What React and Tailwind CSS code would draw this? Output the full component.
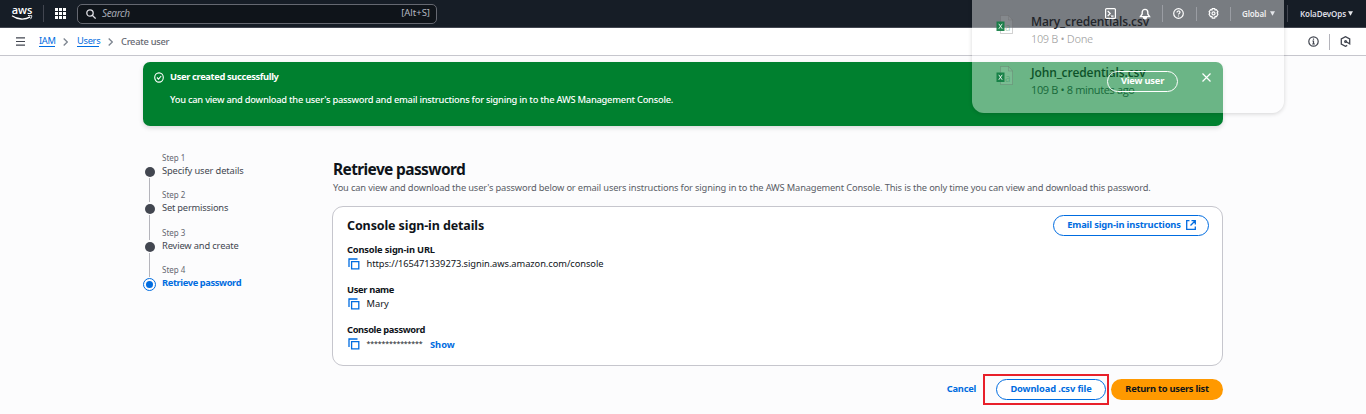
const Copy = () => (
  <svg className="ml-[1px] h-[12px] w-[12px] shrink-0" viewBox="0 0 12 12" fill="none" stroke="#006ce0" strokeWidth="1.3">
    <path d="M1 9V1h8.5" />
    <path d="M3.6 3.6h7.2v7.2H3.6z" />
  </svg>
);

const Chevron = () => (
  <svg className="h-[8px] w-[5px]" viewBox="0 0 5 8" fill="none" stroke="#7d8590" strokeWidth="1.3">
    <path d="M.7.5 4.3 4 .7 7.5" />
  </svg>
);

const Caret = () => (
  <svg className="h-[5px] w-[5px]" viewBox="0 0 5 5" fill="#e4e6ea">
    <path d="M0 .3h5L2.5 4.7z" />
  </svg>
);

const Divider = ({ className = "" }) => <div className={`h-[17px] w-px bg-[#424650] ${className}`} />;

function Header() {
  return (
    <header className="flex h-[28px] items-center border-b border-[#424650] bg-[#161d26] text-[#dedee3]">
      <div className="ml-[11px] flex h-[15px] w-[22px] flex-col items-center">
        <span className="h-[9px] font-['Open_Sans'] text-[11px] leading-[8px] font-semibold tracking-[-0.1px] text-white">aws</span>
        <svg className="h-[6px] w-[22px]" viewBox="0 0 22 6" fill="none" stroke="#fff">
          <path d="M1 .8c5.500 4 13 4.200 18.300 1.100" strokeWidth="1.300" />
          <path d="M17 .6c1.500-.4 3-.4 3.700 0 .1 1.200-.3 2.500-1.400 3.600" strokeWidth="1" />
        </svg>
      </div>
      <Divider className="ml-[10px]" />
      <svg className="ml-[11px] h-[11px] w-[11px]" viewBox="0 0 11 11" fill="#fff">
        {[0, 4, 8].map((y) => [0, 4, 8].map((x) => <rect key={`${x}${y}`} x={x} y={y} width="3" height="3" />))}
      </svg>
      <div className="ml-[11px] flex h-[20px] w-[360px] items-center rounded-[5px] border border-[#656871] bg-[#0f141a] pr-[6px] pl-[8px] text-[10px]">
        <svg className="h-[10px] w-[10px]" viewBox="0 0 10 10" fill="none" stroke="#dedee3" strokeWidth="1.3">
          <circle cx="4" cy="4" r="3.200" />
          <path d="m6.400 6.400 3.200 3.200" />
        </svg>
        <span className="ml-[6px] tracking-[-0.35px] text-[#a4a8b2] italic">Search</span>
        <span className="ml-auto text-[9.500px] text-[#b4b8c0]">[Alt+S]</span>
      </div>
      <div className="relative z-10 ml-[668px] flex h-full items-center">
        <svg className="h-[11px] w-[11px]" viewBox="0 0 11 11" fill="none" stroke="#fff" strokeWidth="1.200">
          <rect x=".6" y=".6" width="9.800" height="9.800" rx="1" />
          <path d="m2.700 3 2.500 2.500L2.700 8M5.800 8.100h2.700" />
        </svg>
        <Divider className="ml-[12px] opacity-0" />
        <svg className="ml-[10px] h-[12px] w-[12px]" viewBox="0 0 12 12" fill="none" stroke="#fff" strokeWidth="1.400">
          <path d="M3.200 6V4.200a2.800 2.800 0 0 1 5.600 0V6l1.700 2.600h-9z" />
          <path d="M4.500 9.500c.3 1.800 2.700 1.800 3 0z" fill="#fff" />
        </svg>
        <div className="ml-[11px] h-[17px] w-px bg-[#9a9da3]" />
        <svg className="ml-[10px] h-[11px] w-[11px]" viewBox="0 0 11 11" fill="none" stroke="#fff" strokeWidth="1.200">
          <circle cx="5.500" cy="5.500" r="4.800" />
          <path d="M4 4.500c0-2 3-2 3-.2 0 1.200-1.500 1-1.500 2.300M5.500 7.400v1.100" />
        </svg>
        <div className="ml-[12px] h-[14px] w-px bg-[#9a9da3]" />
        <svg className="ml-[11px] h-[11px] w-[11px]" viewBox="0 0 11 11" fill="none" stroke="#fff" strokeWidth="1.200">
          <path d="M4.300.7h2.400l.4 1.300 1.300-.3 1.500 2-.8 1.100.8 1.500-1.400 2.200-1.400-.2-.4 1.900H4.300l-.4-1.900-1.400.2-1.400-2.200.8-1.500-.8-1.100 1.500-2 1.300.3z" />
          <circle cx="5.500" cy="5.400" r="1.500" />
        </svg>
        <div className="ml-[11px] h-[14px] w-px bg-[#9a9da3]" />
        <span className="ml-[11px] w-[28px] text-[8px] font-semibold tracking-[-0.15px] whitespace-nowrap text-[#f0f0f2]">Global</span>
        <Caret />
        <Divider className="ml-[12px]" />
        <span className="ml-[12px] w-[48px] text-[8px] font-semibold tracking-[-0.1px] whitespace-nowrap">KolaDevOps</span>
        <Caret />
      </div>
    </header>
  );
}

function Breadcrumbs() {
  return (
    <nav className="flex h-[28px] items-center border-b border-[#c6c6cd] bg-white text-[9.300px] leading-[10px]">
      <svg className="ml-[16px] h-[9px] w-[9px]" viewBox="0 0 9 9" stroke="#424650" strokeWidth="1.200">
        <path d="M0 .9h9M0 4.500h9M0 8.100h9" />
      </svg>
      <a className="ml-[14px] w-[16px] border-b border-[#006ce0] tracking-[-0.3px] whitespace-nowrap text-[#006ce0]">IAM</a>
      <div className="ml-[8px]"><Chevron /></div>
      <a className="ml-[9px] w-[22px] border-b border-[#006ce0] tracking-[-0.3px] whitespace-nowrap text-[#006ce0]">Users</a>
      <div className="ml-[9px]"><Chevron /></div>
      <span className="ml-[8px] font-medium tracking-[-0.27px] whitespace-nowrap text-[#656871]">Create user</span>
      <div className="mr-[15px] ml-auto flex items-center">
        <svg className="h-[11px] w-[11px]" viewBox="0 0 11 11" fill="none" stroke="#424650" strokeWidth="1.200">
          <circle cx="5.500" cy="5.500" r="4.700" />
          <path d="M4.400 5h1.100v3M4.200 8h2.700M5.500 2.500v1.200" />
        </svg>
        <div className="ml-[10px] h-[16px] w-px bg-[#b4b4bb]" />
        <svg className="ml-[10px] h-[11px] w-[11px]" viewBox="0 0 11 11" fill="none" stroke="#424650" strokeWidth="1.300">
          <path d="M7.200 9.400 5.500 10.300 1.300 8V3L5.500.7 9.700 3v4.800L5.800 5.500" />
          <circle cx="5.600" cy="5.500" r=".9" />
        </svg>
      </div>
    </nav>
  );
}

function Banner() {
  return (
    <section className="mx-[143px] mt-[6px] h-[64px] rounded-[7px] bg-[#00802f] text-white shadow-[0_2px_5px_rgba(0,0,0,0.14)]">
      <div className="flex h-full items-start pt-[9px] pr-[12px] pl-[11px]">
        <svg className="mt-[1px] h-[11px] w-[10px]" viewBox="0 0 10 11" fill="none" stroke="#fff" strokeWidth="1.100">
          <ellipse cx="5" cy="5.500" rx="4.300" ry="4.600" />
          <path d="m3 5.500 1.500 1.600L7.200 4" />
        </svg>
        <div className="ml-[6px] text-[9.300px] leading-[12px] whitespace-nowrap">
          <p className="font-bold tracking-[-0.35px]">User created successfully</p>
          <p className="mt-[11px] font-medium tracking-[-0.235px]">You can view and download the user's password and email instructions for signing in to the AWS Management Console.</p>
        </div>
        <button className="relative z-10 ml-auto flex h-[21px] w-[71px] items-center justify-center rounded-full border border-white pb-[1px] text-[9.300px] font-bold tracking-[-0.2px] whitespace-nowrap">View user</button>
        <svg className="relative z-10 mt-[2px] ml-[24px] h-[9px] w-[9px]" viewBox="0 0 9 9" stroke="#fff" strokeWidth="1.200">
          <path d="m.5.5 8 8M8.500.5l-8 8" />
        </svg>
      </div>
    </section>
  );
}

const steps = [
  { label: "Specify user details", style: "tracking-[-0.11px] text-[#424650]" },
  { label: "Set permissions", style: "tracking-[-0.2px] text-[#424650]" },
  { label: "Review and create", style: "tracking-[-0.14px] text-[#424650]" },
  { label: "Retrieve password", style: "font-bold tracking-[-0.38px] text-[#006ce0]" },
];

function Steps() {
  return (
    <ol className="mt-[26px] w-[189px]">
      {steps.map(({ label, style }, i) => {
        const first = i === 0;
        const active = i === 3;
        return (
          <li key={label} className="flex h-[37.300px]">
            <div className="flex w-[13px] flex-col items-center">
              <div className={first ? "h-[13px] shrink-0" : "h-[13px] w-px shrink-0 bg-[#b4b4bb]"} />
              {active ? (
                <div className="mt-[1px] flex h-[13px] w-[13px] shrink-0 items-center justify-center rounded-full border-[1.500px] border-[#006ce0]">
                  <div className="h-[7px] w-[7px] rounded-full bg-[#006ce0]" />
                </div>
              ) : (
                <>
                  <div className="mt-[2px] h-[10px] w-[10px] shrink-0 rounded-full bg-[#424650]" />
                  <div className="mt-[1px] w-px grow bg-[#b4b4bb]" />
                </>
              )}
            </div>
            <div className="ml-[6px] whitespace-nowrap">
              <p className="text-[8px] leading-[12px] text-[#656871]">Step {i + 1}</p>
              <p className={`text-[9.300px] leading-[14px] ${style}`}>{label}</p>
            </div>
          </li>
        );
      })}
    </ol>
  );
}

function Field({ label, labelStyle, children }) {
  return (
    <div className="h-[40px] text-[9.300px] leading-[14px] whitespace-nowrap">
      <p className={`font-bold ${labelStyle}`}>{label}</p>
      <div className="flex h-[14px] items-center">
        <Copy />
        {children}
      </div>
    </div>
  );
}

function Details() {
  return (
    <main className="w-[891px] text-[#0f141a]">
      <h1 className="mt-[33px] pl-[1px] text-[15.500px] leading-[20px] font-bold tracking-[-0.63px] whitespace-nowrap">Retrieve password</h1>
      <p className="mt-[3px] pl-[1px] text-[9.300px] leading-[12px] tracking-[-0.15px] whitespace-nowrap text-[#5a5d66]">
        You can view and download the user's password below or email users instructions for signing in to the AWS Management Console. This is the only time you can view and download this password.
      </p>
      <section className="mt-[12px] h-[160px] rounded-[11px] border border-[#c6c6cd] bg-white pr-[13px] pl-[14px]">
        <div className="flex h-[36px] items-center justify-between pt-[1px]">
          <h2 className="pt-[1px] text-[12.500px] font-bold tracking-[-0.11px] whitespace-nowrap">Console sign-in details</h2>
          <button className="flex h-[21px] w-[156px] items-center justify-center gap-[5px] rounded-full border border-[#006ce0] pb-[1px] pl-[1px] text-[9.300px] font-bold tracking-[-0.14px] whitespace-nowrap text-[#006ce0]">
            <span>Email sign-in instructions</span>
            <svg className="h-[10px] w-[10px]" viewBox="0 0 10 10" fill="none" stroke="#006ce0" strokeWidth="1.300">
              <path d="M3.500.7H.7v8.600h8.600V6.500M5.500.7h3.800v3.800M9.200.8 4.500 5.500" />
            </svg>
          </button>
        </div>
        <Field label="Console sign-in URL" labelStyle="tracking-[-0.16px]">
          <span className="ml-[6.500px] tracking-[-0.06px]">https://165471339273.signin.aws.amazon.com/console</span>
        </Field>
        <Field label="User name" labelStyle="tracking-[-0.33px]">
          <span className="ml-[6.500px]">Mary</span>
        </Field>
        <Field label="Console password" labelStyle="tracking-[-0.34px]">
          <span className="ml-[6.500px] w-[55.500px] text-[7px] leading-[12px] tracking-[-0.12px]">***************</span>
          <a className="mt-[2px] ml-[8px] font-bold text-[#006ce0]">Show</a>
        </Field>
      </section>
      <div className="mt-[8px] flex h-[31px] items-center justify-end text-[9.300px] font-bold whitespace-nowrap">
        <a className="mr-[7px] pb-[1px] tracking-[-0.25px] text-[#006ce0]">Cancel</a>
        <div className="flex h-[31px] w-[126px] items-center justify-end border-2 border-[#e8202a] pr-[1px]">
          <button className="h-[21px] w-[110px] rounded-full border border-[#006ce0] bg-white pb-[1px] tracking-[-0.12px] text-[#006ce0]">Download .csv file</button>
        </div>
        <button className="ml-[2px] h-[21px] w-[112px] rounded-full bg-[#ff9900] pb-[1px] tracking-[-0.25px]">Return to users list</button>
      </div>
    </main>
  );
}

function FileRow({ name, meta, nameColor, metaColor }) {
  return (
    <div className="flex h-[51px]">
      <svg className="mt-[2px] h-[20px] w-[18px]" viewBox="0 0 18 20">
        <path d="M4.500.5h8l4 4.500v13.500h-12z" fill="#fff" fillOpacity=".1" stroke="#666" strokeOpacity=".3" />
        <path d="M12.500.5V5h4" fill="none" stroke="#666" strokeOpacity=".3" />
        <rect x=".5" y="6.500" width="8" height="9.500" fill="#107c41" fillOpacity=".9" />
        <path d="m2.800 8.800 3.400 5M6.200 8.800l-3.400 5" stroke="#fff" strokeOpacity=".85" />
        <text x="9" y="16" fontSize="10" fill="#107c41" fillOpacity=".35" fontFamily="Open Sans">a</text>
      </svg>
      <div className="ml-[17px] font-['Open_Sans'] whitespace-nowrap">
        <p className={`text-[12px] leading-[17px] font-semibold tracking-[-0.13px] ${nameColor}`}>{name}</p>
        <p className={`text-[11px] leading-[17px] tracking-[-0.36px] ${metaColor}`}>{meta}</p>
      </div>
    </div>
  );
}

function Downloads() {
  return (
    <aside className="pointer-events-none absolute top-[-12px] left-[972px] h-[125px] w-[312px] rounded-[12px] bg-white/42 pt-[25px] pl-[24px] shadow-[0_1px_4px_rgba(0,0,0,0.16)]">
      <FileRow name="Mary_credentials.csv" meta="109 B • Done" nameColor="text-[#22252a]" metaColor="text-black/35" />
      <FileRow name="John_credentials.csv" meta="109 B • 8 minutes ago" nameColor="text-[#0d5229]" metaColor="text-[#17693a]" />
    </aside>
  );
}

export default function App() {
  return (
    <div className="relative h-[414px] w-[1366px] overflow-hidden bg-[#fcfcfd] font-['Noto_Sans',sans-serif]">
      <Header />
      <Breadcrumbs />
      <Banner />
      <div className="flex pl-[143px]">
        <Steps />
        <Details />
      </div>
      <Downloads />
    </div>
  );
}
